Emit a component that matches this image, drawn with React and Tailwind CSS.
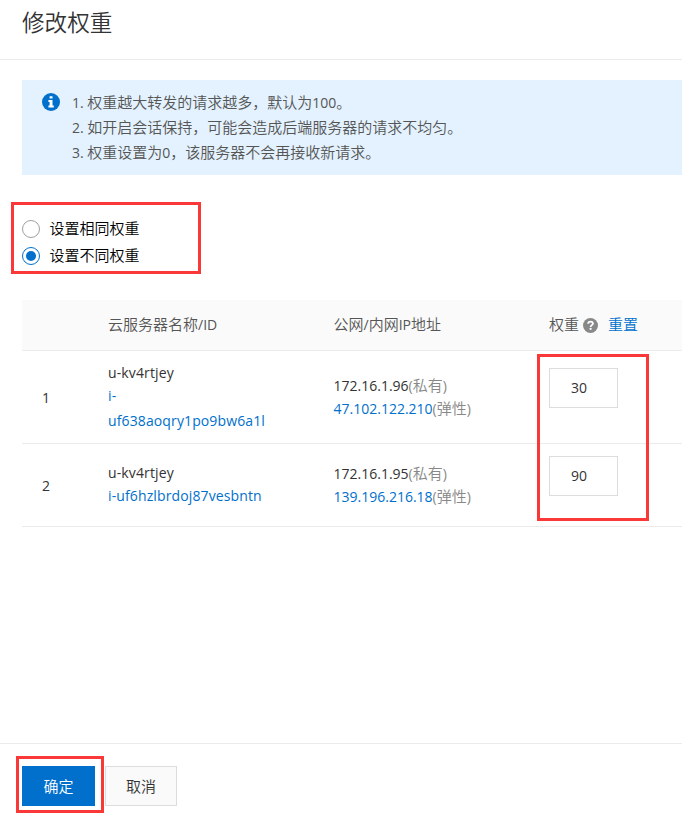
import { useState } from 'react';

const TIPS = [
  ['1. ', '权重越大转发的请求越多，默认为', '100', '。'],
  ['2. ', '如开启会话保持，可能会造成后端服务器的请求不均匀。'],
  ['3. ', '权重设置为', '0', '，该服务器不会再接收新请求。'],
];

const SERVERS = [
  {
    name: 'u-kv4rtjey',
    idLines: ['i-', 'uf638aoqry1po9bw6a1l'],
    privateIp: '172.16.1.96',
    publicIp: '47.102.122.210',
    weight: 30,
    rowClass: 'h-[93px]',
    nameClass: 'pt-[10px]',
  },
  {
    name: 'u-kv4rtjey',
    idLines: ['i-uf6hzlbrdoj87vesbntn'],
    privateIp: '172.16.1.95',
    publicIp: '139.196.216.18',
    weight: 90,
    rowClass: 'h-[83px]',
    nameClass: 'pt-[17px]',
  },
];

const COLS = 'grid grid-cols-[86px_225.5px_215.5px_133px]';

// Latin runs are set a little smaller than the Chinese text around them
function Latin({ children }) {
  return <span className="text-[14px] font-normal whitespace-pre">{children}</span>;
}

function InfoIcon() {
  return (
    <svg className="w-[18px] h-[18px] shrink-0" viewBox="0 0 18 18">
      <circle cx="9" cy="9" r="9" fill="#0070cc" />
      <path d="M7.6 3.2h2.9v2.4H7.6zM6.4 7h4.1v5.6h1.3v1.9H6.4v-1.9h1.2V8.9H6.4z" fill="#fff" />
    </svg>
  );
}

function HelpIcon() {
  return (
    <svg className="w-[15px] h-[15px] shrink-0" viewBox="0 0 15 15">
      <circle cx="7.5" cy="7.5" r="7.5" fill="#888" />
      <path d="M5.2 5.8C5.2 4.4 6.1 3.7 7.5 3.7S9.9 4.5 9.9 5.7C9.9 7.1 7.6 7.2 7.6 8.9" fill="none" stroke="#fff" strokeWidth="1.8" />
      <path d="M6.6 9.9h2v1.9h-2z" fill="#fff" />
    </svg>
  );
}

function Radio({ label, checked, onSelect }) {
  return (
    <button type="button" role="radio" aria-checked={checked} onClick={onSelect} className="flex items-center h-[27px] text-black">
      <span
        className={`flex items-center justify-center w-[18px] h-[18px] rounded-full border bg-white ${checked ? 'border-[#0070cc]' : 'border-[#a0a0a0]'}`}
      >
        {checked && <span className="w-[10px] h-[10px] rounded-full bg-[#0070cc]" />}
      </span>
      <span className="ml-[9.5px]">{label}</span>
    </button>
  );
}

function ServerRow({ server, index, weight, onWeight }) {
  return (
    <div className={`${COLS} ${server.rowClass} border-b border-[#ebebeb]`}>
      <div className="flex items-center pl-5"><Latin>{index}</Latin></div>
      <div className={`${server.nameClass} text-[14px] font-normal tracking-[0.12px]`}>
        <div className="h-[23px] leading-[23px]">{server.name}</div>
        <div className="space-y-px">
          {server.idLines.map((line) => (
            <div key={line} className="h-6 leading-6 text-[#0070cc]">{line}</div>
          ))}
        </div>
      </div>
      <div className="flex flex-col justify-center leading-[22px]">
        <div><Latin>{server.privateIp}</Latin><span className="text-[#888]"><Latin>(</Latin>私有<Latin>)</Latin></span></div>
        <div><Latin><span className="text-[#0070cc]">{server.publicIp}</span></Latin><span className="text-[#888]"><Latin>(</Latin>弹性<Latin>)</Latin></span></div>
      </div>
      <div className={index === 1 ? 'pt-[17px]' : 'pt-3'}>
        <input
          value={weight}
          onChange={(e) => onWeight(e.target.value)}
          className="block w-[69px] h-10 pl-[21px] pb-px border border-[#ddd] bg-white text-[14px] font-normal outline-none"
        />
      </div>
    </div>
  );
}

export default function App() {
  const [mode, setMode] = useState('different');
  const [weights, setWeights] = useState(SERVERS.map((s) => s.weight));

  const updateWeight = (i, value) => setWeights(weights.map((w, j) => (j === i ? value : w)));

  return (
    <div className="relative flex flex-col h-[814px] overflow-hidden bg-white text-[15px] font-[350] text-[#333] font-['Open_Sans','Noto_Sans_CJK_SC',sans-serif]">
      <header className="h-[60px] shrink-0 pl-[22px] border-b border-[#ebebeb]">
        <h1 className="text-[22.6px] leading-[46px] font-[350]">修改权重</h1>
      </header>

      <main className="flex-1 pl-[22px] pt-5">
        <div className="flex h-[95px] pl-5 pt-[10px] bg-[#e3f2fe] text-[#555]">
          <div className="pt-[3px]"><InfoIcon /></div>
          <div className="ml-3">
            {TIPS.map((parts) => (
              <p key={parts[0]} className="h-[25px] leading-[25px] whitespace-nowrap">
                {parts.map((part) => (/^[\d. ]+$/.test(part) ? <Latin key={part}>{part}</Latin> : part))}
              </p>
            ))}
          </div>
        </div>

        <div role="radiogroup" className="mt-10 h-[54px]">
          <Radio label="设置相同权重" checked={mode === 'same'} onSelect={() => setMode('same')} />
          <Radio label="设置不同权重" checked={mode === 'different'} onSelect={() => setMode('different')} />
        </div>

        <div className="mt-[31px]">
          <div className={`${COLS} items-center h-[51px] pb-[2px] bg-[#fafafa] border-b border-[#ebebeb] text-[#555]`}>
            <div />
            <div>云服务器名称<Latin>/ID</Latin></div>
            <div>公网<Latin>/</Latin>内网<Latin>IP</Latin>地址</div>
            <div className="flex items-center">
              权重
              <span className="ml-1 mt-0.5"><HelpIcon /></span>
              <button
                type="button"
                className="ml-[10px] text-[#0070cc]"
                onClick={() => setWeights(SERVERS.map((s) => s.weight))}
              >
                重置
              </button>
            </div>
          </div>
          {SERVERS.map((server, i) => (
            <ServerRow
              key={server.privateIp}
              server={server}
              index={i + 1}
              weight={weights[i]}
              onWeight={(value) => updateWeight(i, value)}
            />
          ))}
        </div>
      </main>

      <footer className="flex h-[71px] shrink-0 pl-[22px] pt-[22px] border-t border-[#ebebeb]">
        <button type="button" className="w-[73px] h-10 bg-[#0070cc] text-white">确定</button>
        <button type="button" className="ml-[10px] w-[72px] h-10 bg-[#fafafa] border border-[#ddd]">取消</button>
      </footer>

      {/* red callouts over the options, the weights and the confirm button */}
      <div className="absolute left-[11px] top-[202px] w-[190px] h-[72px] border-3 border-[#fb3838] pointer-events-none" />
      <div className="absolute left-[537px] top-[354px] w-[112px] h-[167px] border-3 border-[#fb3838] pointer-events-none" />
      <div className="absolute left-[16px] top-[756px] w-[88px] h-[57px] border-3 border-[#fb3838] pointer-events-none" />
    </div>
  );
}
